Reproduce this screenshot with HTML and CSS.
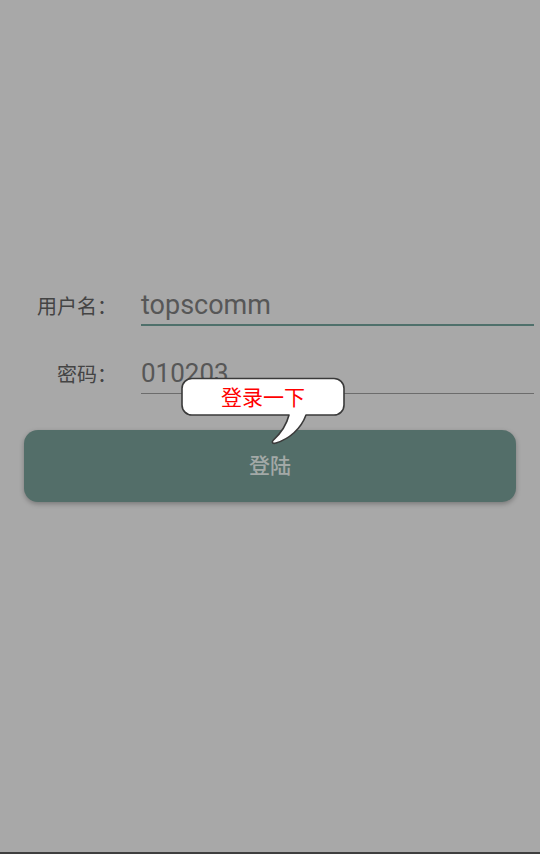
FILE: index.html
```html
<!DOCTYPE html>
<html lang="zh">
<head>
<meta charset="utf-8">
<title>登陆</title>
<link rel="stylesheet" href="styles.css">
</head>
<body>
<main class="login">
  <div class="field">
    <span class="field-label">用户名：</span>
    <div class="field-input is-active">topscomm</div>
  </div>
  <div class="field field-second">
    <span class="field-label">密码：</span>
    <div class="field-input">010203</div>
  </div>
  <div class="action">
    <button class="login-btn" type="button">登陆</button>
    <div class="tip">
      <svg class="tip-shape" width="166" height="68" viewBox="0 0 166 68">
        <path d="M11,1.5 H153 A10,10 0 0 1 163,11.5 V28 A10,10 0 0 1 153,38 H125 C120,52 108,62 95,66 C92,67 90,65.5 92.5,63 C101,55 106,46 108,38 H11 A10,10 0 0 1 1,28 V11.5 A10,10 0 0 1 11,1.5 Z" fill="#ffffff" stroke="#3a3a3a" stroke-width="1.6" stroke-linejoin="round"/>
      </svg>
      <span class="tip-text">登录一下</span>
    </div>
  </div>
</main>
<div class="bottom-edge"></div>
</body>
</html>
```
FILE: styles.css
```css
html, body {
  margin: 0;
  padding: 0;
}
body {
  background: #a8a8a8;
  font-family: Roboto, "Noto Sans CJK SC", sans-serif;
  min-height: 854px;
  display: flex;
  flex-direction: column;
}
.login {
  flex: 1;
  padding: 280px 24px 0 24px;
}
.field {
  display: flex;
  align-items: center;
}
.field-second {
  margin-top: 22px;
}
.field-label {
  width: 117px;
  box-sizing: border-box;
  padding-right: 24px;
  padding-top: 4px;
  text-align: right;
  font-size: 20px;
  color: #444444;
  font-family: "Noto Sans CJK SC", sans-serif;
  white-space: nowrap;
}
.field-input {
  flex: 1;
  margin-right: -18px;
  height: 45px;
  line-height: 51px;
  font-size: 26px;
  color: #575757;
  border-bottom: 1px solid #6c6c6c;
}
.field-input.is-active {
  height: 44px;
  font-size: 27px;
  border-bottom: 2px solid #4f706b;
}
.action {
  position: relative;
  margin-top: 36px;
}
.login-btn {
  display: block;
  width: 100%;
  height: 72px;
  padding: 0 0 4px 0;
  border: none;
  border-radius: 14px;
  background: #536e69;
  color: #a3a9a7;
  font-size: 21px;
  font-weight: 500;
  font-family: "Noto Sans CJK SC", sans-serif;
  box-shadow: 0 2px 5px rgba(0, 0, 0, 0.28);
}
.tip {
  position: absolute;
  left: 157px;
  top: -53px;
  width: 166px;
  height: 68px;
}
.tip-shape {
  display: block;
}
.tip-text {
  position: absolute;
  left: 0;
  top: 0;
  width: 164px;
  height: 38px;
  line-height: 38px;
  text-align: center;
  color: #ff0000;
  font-size: 21px;
  font-family: "Noto Sans CJK SC", sans-serif;
}
.bottom-edge {
  height: 2px;
  background: #3e3e3e;
}
```
